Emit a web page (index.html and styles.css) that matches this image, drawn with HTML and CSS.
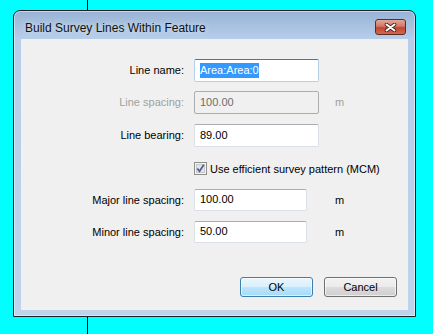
FILE: index.html
```html
<!DOCTYPE html>
<html lang="en">
<head>
  <meta charset="UTF-8">
  <title>Build Survey Lines Within Feature</title>
  <link rel="stylesheet" href="styles.css">
</head>
<body>
<div class="window">
  <div class="titlebar">
    <span class="title">Build Survey Lines Within Feature</span>
    <span class="close">
      <svg width="13" height="9" viewBox="0 0 13 9">
        <path d="M2.5 1.5 L10.5 7.5 M10.5 1.5 L2.5 7.5" stroke="#4a1d16" stroke-width="3.6" stroke-linecap="round"/>
        <path d="M2.5 1.5 L10.5 7.5 M10.5 1.5 L2.5 7.5" stroke="#fff" stroke-width="2" stroke-linecap="round"/>
      </svg>
    </span>
  </div>

  <div class="client">
    <div class="form">
      <label class="lbl">Line name:</label>
      <div class="field focus"><span class="sel">Area:Area:0</span></div>
      <span></span>

      <label class="lbl disabled">Line spacing:</label>
      <div class="field off">100.00</div>
      <span class="unit disabled">m</span>

      <label class="lbl">Line bearing:</label>
      <div class="field">89.00</div>
      <span></span>

      <span></span>
      <div class="check-row">
        <span class="checkbox">
          <svg width="13" height="13" viewBox="0 0 13 13">
            <rect x="0.5" y="0.5" width="12" height="12" fill="#f4f4f4" stroke="#8f8f8f"/>
            <rect x="2.5" y="2.5" width="8" height="8" fill="#e3e3e3" stroke="#c9c9c9"/>
            <path d="M3.3 6.4 L5.5 9.3 L9.8 2.8" fill="none" stroke="#4c5f93" stroke-width="1.7"/>
          </svg>
        </span>
        Use efficient survey pattern (MCM)
      </div>

      <label class="lbl short">Major line spacing:</label>
      <div class="field narrow">100.00</div>
      <span class="unit short">m</span>

      <label class="lbl short">Minor line spacing:</label>
      <div class="field narrow">50.00</div>
      <span class="unit short">m</span>
    </div>

    <div class="buttons">
      <button class="btn default">OK</button>
      <button class="btn">Cancel</button>
    </div>
  </div>
</div>
</body>
</html>
```

FILE: styles.css
```css
body {
  margin: 0;
  height: 334px;
  overflow: hidden;
  font-family: 'Liberation Sans', Arial, sans-serif;
  font-size: 11px;
  color: #000;
  /* the thin black line running behind the dialog */
  background: linear-gradient(#000, #000) 87px 0 / 1px 100% no-repeat, #00ffff;
}

.window {
  margin: 10px 0 0 13px;
  width: 403px;
  height: 307px;
  box-sizing: border-box;
  border: 1px solid #1b1f24;
  border-radius: 7px 7px 0 0;
  background: linear-gradient(to bottom, #98b3d6 0, #b6cee9 28px, #bdd4ec 100%);
  box-shadow: inset 0 0 0 1px rgba(255,255,255,0.45);
  padding: 0 7px 6px 7px;
  display: flex;
  flex-direction: column;
}

.titlebar {
  height: 28px;
  display: flex;
  align-items: flex-start;
  justify-content: space-between;
}

.title {
  margin: 10px 0 0 4px;
  font-size: 12px;
  line-height: 15px;
  color: #111;
  text-shadow: 0 0 6px rgba(255,255,255,0.8);
}

.close {
  margin: 8px 2px 0 0;
  width: 31px;
  height: 16px;
  box-sizing: border-box;
  border: 1px solid #5e2a22;
  border-radius: 3px;
  background: linear-gradient(to bottom, #e2a89c 0, #d27866 45%, #c2452f 55%, #cf6a52 100%);
  display: flex;
  align-items: center;
  justify-content: center;
}

.client {
  flex: 1;
  background: #f0f0f0;
  padding: 20px 11px 13px 0;
  display: flex;
  flex-direction: column;
}

.form {
  display: grid;
  grid-template-columns: 163px 131px auto;
  grid-template-rows: 32px 33px 38px 27px 32px 22px;
  column-gap: 10px;
  align-items: start;
}

.lbl {
  text-align: right;
  line-height: 23px;
}

.lbl.short,
.unit.short {
  line-height: 22px;
}

.unit {
  line-height: 23px;
}

.disabled {
  color: #a0a0a0;
}

.field {
  width: 125px;
  height: 23px;
  box-sizing: border-box;
  border: 1px solid #dbdfe6;
  border-top-color: #abadb3;
  border-radius: 2px;
  background: #fff;
  padding: 0 0 0 5px;
  line-height: 20px;
}

.field.narrow {
  width: 113px;
  height: 22px;
  line-height: 19px;
}

.field.focus {
  border-color: #b5cfe7;
  border-top-color: #3d7bad;
}

.field.off {
  background: #f0f0f0;
  border-color: #adadad;
  color: #6d6d6d;
}

.sel {
  background: #3399ff;
  color: #fff;
  padding: 1px 0 2px;
}

.check-row {
  grid-column: 2 / 4;
  display: flex;
  align-items: center;
  gap: 3px;
  height: 13px;
  white-space: nowrap;
}

.checkbox {
  width: 13px;
  height: 13px;
  display: flex;
}

.buttons {
  margin-top: auto;
  display: flex;
  justify-content: flex-end;
  gap: 11px;
}

.btn {
  width: 73px;
  height: 20px;
  padding: 0;
  font-family: inherit;
  font-size: 11px;
  color: #000;
  border: 1px solid #707070;
  border-radius: 3px;
  background: linear-gradient(to bottom, #f2f2f2 0, #ebebeb 50%, #dddddd 50%, #cfcfcf 100%);
  box-shadow: inset 0 0 0 1px rgba(255,255,255,0.6);
}

.btn.default {
  border-color: #3c7fb1;
  background: linear-gradient(to bottom, #eaf6fd 0, #d9f0fc 50%, #bee6fd 50%, #a7d9f5 100%);
}
```
